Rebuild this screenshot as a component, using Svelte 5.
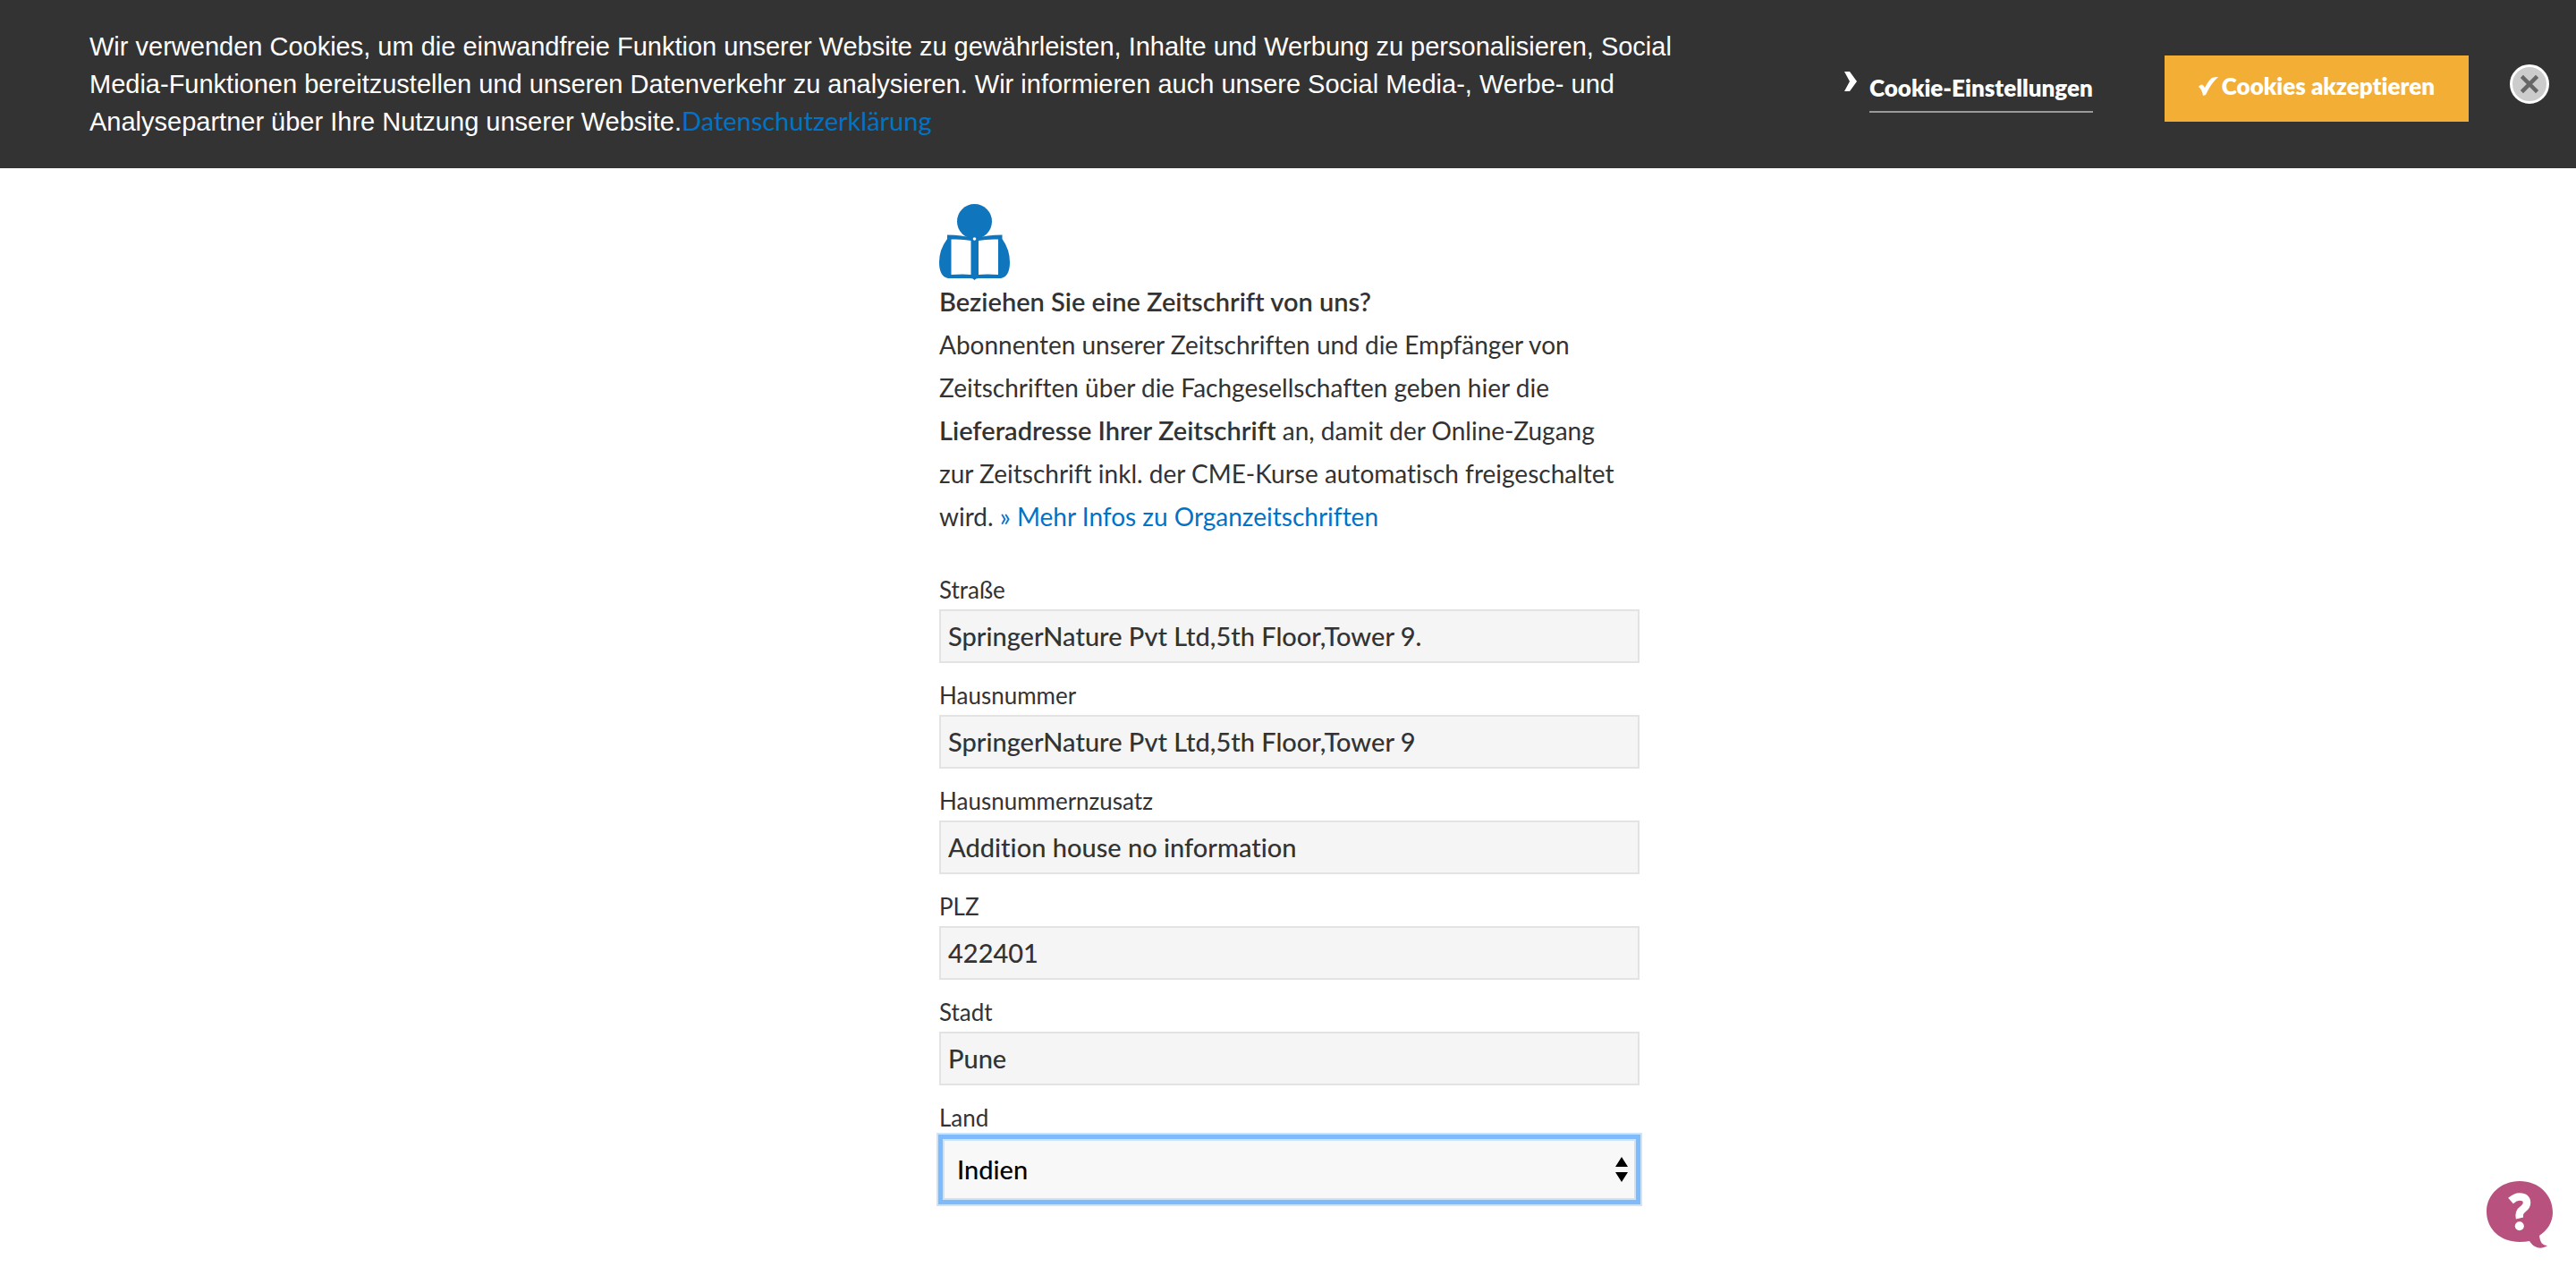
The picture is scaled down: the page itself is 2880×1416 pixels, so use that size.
<script>
  let fields = $state([
    { id: 'street', label: 'Straße', value: 'SpringerNature Pvt Ltd,5th Floor,Tower 9.' },
    { id: 'number', label: 'Hausnummer', value: 'SpringerNature Pvt Ltd,5th Floor,Tower 9' },
    { id: 'addition', label: 'Hausnummernzusatz', value: 'Addition house no information' },
    { id: 'zip', label: 'PLZ', value: '422401' },
    { id: 'city', label: 'Stadt', value: 'Pune' }
  ]);
  let country = $state('Indien');
</script>

<header class="cookies">
  <p class="notice">
    Wir verwenden Cookies, um die einwandfreie Funktion unserer Website zu gewährleisten, Inhalte und Werbung zu
    personalisieren, Social Media-Funktionen bereitzustellen und unseren Datenverkehr zu analysieren. Wir informieren
    auch unsere Social Media-, Werbe- und Analysepartner über Ihre Nutzung unserer Website.<a href="#privacy">Datenschutzerklärung</a>
  </p>
  <div class="settings">
    <svg class="chevron" viewBox="0 0 14 22" aria-hidden="true"><path d="M0 0H6L14 11L6 22H0L6 11Z" fill="#fff" /></svg>
    <a href="#settings">Cookie-Einstellungen</a>
  </div>
  <button class="accept" type="button">
    <svg class="check" viewBox="0 0 22 21" aria-hidden="true">
      <path d="M0 11Q2 8 4 8.500Q6 9.500 7 12Q11 4 15 1Q18 0 22 0Q14 7 8 20L5 21Q4 14 0 11Z" fill="#fff" />
    </svg>
    <span>Cookies akzeptieren</span>
  </button>
  <button class="close" type="button" aria-label="Schließen">
    <svg viewBox="0 0 44 44" aria-hidden="true">
      <circle cx="22" cy="22" r="20.5" fill="#ccc" stroke="#fff" stroke-width="3" />
      <path d="M15 15L29 29M29 15L15 29" stroke="#666" stroke-width="4.5" stroke-linecap="square" />
    </svg>
  </button>
</header>

<main>
  <svg class="reader" viewBox="0 0 79 85" aria-hidden="true">
    <circle cx="39.5" cy="19.5" r="19.5" fill="#0f75bc" />
    <path
      d="M9 34.5Q25 34.5 39.5 38.5Q54 34.5 70.5 34.5V39Q79 51 79 65Q79 81 69 83Q55 83 44 83Q41 83 39.500 85Q38 83 35 83H10Q0 81 0 65Q0 51 9 39Z"
      fill="#0f75bc"
    />
    <path d="M13.500 39.500Q27 39 35.500 41V79Q27 78 13.500 79Z M66 39.500Q53 39 44 41V79Q53 78 66 79Z" fill="#fff" />
    <circle cx="39.500" cy="39" r="1.800" fill="#fff" />
  </svg>
  <div class="intro">
    <h2>Beziehen Sie eine Zeitschrift von uns?</h2>
    <p>
      Abonnenten unserer Zeitschriften und die Empfänger von Zeitschriften über die Fachgesellschaften geben hier die
      <strong>Lieferadresse Ihrer Zeitschrift</strong> an, damit der Online-Zugang zur Zeitschrift inkl. der CME-Kurse
      automatisch freigeschaltet wird. <a href="#journals">» Mehr Infos zu Organzeitschriften</a>
    </p>
  </div>

  <form>
    {#each fields as field (field.id)}
      <div class="field">
        <label for={field.id}>{field.label}</label>
        <input id={field.id} type="text" bind:value={field.value} />
      </div>
    {/each}
    <div class="field">
      <label for="country">Land</label>
      <div class="picker">
        <select id="country" bind:value={country}>
          <option>Indien</option>
          <option>Deutschland</option>
          <option>Österreich</option>
          <option>Schweiz</option>
        </select>
        <svg class="arrows" viewBox="0 0 14 28" aria-hidden="true"><path d="M0 11L7 0L14 11ZM0 17H14L7 28Z" /></svg>
      </div>
    </div>
  </form>
</main>

<button class="help" type="button" aria-label="Hilfe">
  <svg viewBox="0 0 74 75" aria-hidden="true">
    <path d="M37 0C58 0 74 15 74 35C74 46 68 55 59 61C60 68 62 72 68 72C61 77 53 75 48 67Q43 68 37 68C16 68 0 54 0 34C0 15 16 0 37 0Z" fill="#b9517f" />
    <path d="M27 22Q32 17.500 37 17.500Q45 17.500 45 24.500Q45 28 40.500 31.500Q35.500 35 37 41.500" fill="none" stroke="#fff" stroke-width="8.500" />
    <circle cx="36.800" cy="50.300" r="5" fill="#fff" />
  </svg>
</button>

<style>
  :global(body) {
    background: #fff;
    color: #333;
    font-family: Lato, 'Noto Sans', sans-serif;
    font-size: 28px;
    font-variant-ligatures: none;
  }

  a {
    color: #0073c8;
    text-decoration: none;
  }

  button {
    border: 0;
    padding: 0;
    background: none;
    font: inherit;
    cursor: pointer;
  }

  svg {
    display: block;
  }

  .cookies {
    display: flex;
    align-items: center;
    padding: 31px 30px 31px 100px;
    background: #333;
    color: #fff;
  }

  .notice {
    flex: 0 1 1840px;
    margin: 0;
    font-family: 'Liberation Sans', Arial, sans-serif;
    font-size: 29px;
    line-height: 42px;
  }

  .notice a {
    font-family: Lato, 'Noto Sans', sans-serif;
    line-height: 1;
  }

  .settings {
    display: flex;
    align-items: flex-start;
    gap: 14px;
    margin-left: auto;
    padding-top: 18px;
    font-size: 26px;
    font-weight: 800;
    line-height: 36px;
  }

  .settings a {
    padding-bottom: 8px;
    border-bottom: 2px solid #999;
    color: #fff;
  }

  .chevron {
    width: 14px;
    height: 22px;
  }

  .accept {
    display: flex;
    align-items: center;
    gap: 4px;
    margin: 10px 46px 0 80px;
    padding: 16px 38px 22px;
    background: #f3ae35;
    color: #fff;
    font-size: 26px;
    font-weight: 800;
    line-height: 36px;
  }

  .check {
    width: 22px;
    height: 21px;
  }

  .close svg {
    width: 44px;
    height: 44px;
  }

  main {
    max-width: 783px;
    margin: 0 auto;
    padding: 40px 0 40px 3px;
  }

  .reader {
    width: 79px;
    height: 85px;
  }

  .intro {
    padding-right: 14px;
    line-height: 48px;
  }

  h2,
  strong {
    margin: 0;
    font-size: 29px;
    font-weight: 600;
  }

  strong {
    line-height: 1;
  }

  .intro p {
    margin: 0 0 40px;
  }

  form {
    display: grid;
    gap: 18px;
  }

  .field {
    display: grid;
    gap: 4px;
  }

  label {
    font-size: 26px;
    line-height: 36px;
  }

  input,
  select {
    box-sizing: border-box;
    margin: 0;
    outline: 0;
    font-family: inherit;
    font-size: 29px;
    font-weight: 500;
    font-variant-ligatures: none;
  }

  input {
    width: 100%;
    height: 60px;
    padding: 0 8px 2px;
    border: 2px solid #e3e3e3;
    background: #f5f5f5;
    color: #333;
  }

  .picker {
    position: relative;
    padding: 2px 4px;
  }

  select {
    width: 100%;
    height: 68px;
    padding: 0 14px 2px;
    border: 2px solid #cbe3fb;
    background: #f8f8f8;
    box-shadow:
      0 0 0 5px #7fbbfb,
      0 0 0 7px #cbe3fb;
    color: #000;
    appearance: none;
  }

  .arrows {
    position: absolute;
    top: 50%;
    right: 13px;
    width: 14px;
    height: 28px;
    margin-top: -14px;
    pointer-events: none;
  }

  .help {
    position: fixed;
    right: 26px;
    bottom: 21px;
  }

  .help svg {
    width: 74px;
    height: 75px;
  }
</style>
